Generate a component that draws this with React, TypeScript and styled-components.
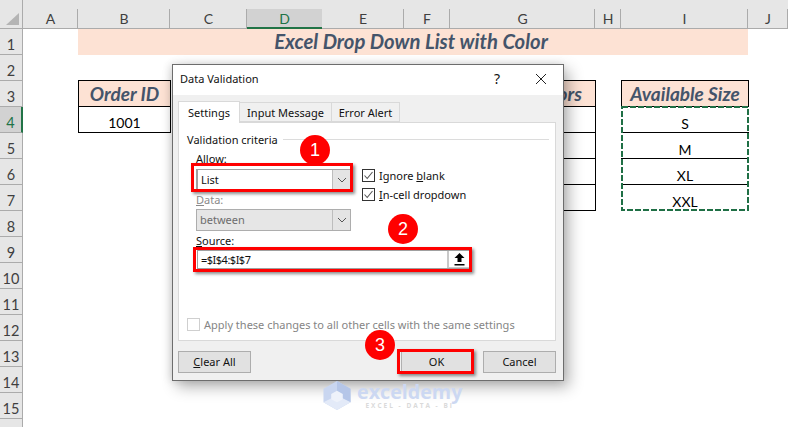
import React from "react";
import styled, { createGlobalStyle } from "styled-components";

const Global = createGlobalStyle`
  html, body { margin: 0; padding: 0; background: #fff; }
  body { width: 788px; height: 427px; overflow: hidden; }
`;

const Page = styled.div`
  position: relative;
  width: 788px;
  height: 427px;
  overflow: hidden;
  background: #fff;
`;

const Sheet = styled.div`
  display: grid;
  grid-template-columns: 23px 55px 92px 77px 75px 82px 46px 145px 26px 127px 40px;
  grid-template-rows: 29px repeat(16, 26px);
  font-family: "Lato", "Liberation Sans", sans-serif;
  color: #000;
`;

const Corner = styled.div`
  grid-column: 1;
  grid-row: 1;
  background: #e6e6e6;
  border-right: 1px solid #ababab;
  border-bottom: 1px solid #ababab;
  box-sizing: border-box;
  display: flex;
  align-items: flex-end;
  justify-content: flex-end;
  padding: 0 3px 3px 0;
`;

const ColHead = styled.div<{ $col: number; $sel?: boolean }>`
  grid-column: ${(p) => p.$col};
  grid-row: 1;
  padding-top: 9px;
  box-sizing: border-box;
  background: linear-gradient(#e6e6e6 9px, ${(p) => (p.$sel ? "#d2d2d2" : "#e6e6e6")} 9px);
  border-bottom: ${(p) => (p.$sel ? "2px solid #217346" : "1px solid #ababab")};
  position: relative;
  display: flex;
  align-items: center;
  justify-content: center;
  font-size: 14px;
  color: ${(p) => (p.$sel ? "#217346" : "#3f3f3f")};
  &::after {
    content: "";
    position: absolute;
    right: 0;
    top: 9px;
    bottom: 0;
    width: 1px;
    background: ${(p) => (p.$sel ? "transparent" : "#ababab")};
  }
`;

const RowHead = styled.div<{ $row: number; $sel?: boolean }>`
  grid-column: 1;
  grid-row: ${(p) => p.$row + 1};
  box-sizing: border-box;
  padding-top: 6px;
  background: ${(p) => (p.$sel ? "#d2d2d2" : "#e6e6e6")};
  border-bottom: 1px solid #ababab;
  border-right: ${(p) => (p.$sel ? "2px solid #217346" : "1px solid #ababab")};
  display: flex;
  align-items: center;
  justify-content: center;
  font-size: 14.5px;
  color: ${(p) => (p.$sel ? "#217346" : "#3f3f3f")};
`;

const Banner = styled.div`
  grid-column: 3 / 11;
  grid-row: 2;
  background: #fde2d4;
  color: #44546a;
  font-weight: 700;
  font-style: italic;
  font-size: 20.3px;
  display: flex;
  align-items: center;
  justify-content: center;
  padding: 0 4px 3px 0;
`;

const HeadCell = styled.div<{ $col: number }>`
  grid-column: ${(p) => p.$col};
  grid-row: 4;
  margin: -1px -1px 0 0;
  box-sizing: border-box;
  border: 1px solid #000;
  background: #fde2d4;
  color: #44546a;
  font-weight: 700;
  font-style: italic;
  font-size: 19px;
  display: flex;
  align-items: center;
  justify-content: center;
  white-space: nowrap;
`;

const DataCell = styled.div<{ $col: number; $row: number }>`
  grid-column: ${(p) => p.$col};
  grid-row: ${(p) => p.$row + 1};
  margin: -1px -1px 0 0;
  box-sizing: border-box;
  border: 1px solid #000;
  padding-top: 6px;
  font-size: 14px;
  display: flex;
  align-items: center;
  justify-content: center;
`;

const SizeCell = styled.div<{ $row: number; $first?: boolean }>`
  grid-column: 10;
  grid-row: ${(p) => p.$row + 1};
  margin: -1px -1px 0 0;
  box-sizing: border-box;
  border-top: ${(p) => (p.$first ? "none" : "1px solid #000")};
  padding-top: ${(p) => (p.$first ? 7 : 6)}px;
  font-size: 14px;
  display: flex;
  align-items: center;
  justify-content: center;
`;

const MarchingAnts = styled.svg`
  grid-column: 10;
  grid-row: 5 / 9;
  margin: -1px -1px 0 0;
  width: 128px;
  height: 105px;
  z-index: 1;
`;

const Dialog = styled.div`
  position: absolute;
  left: 172px;
  top: 64px;
  width: 392px;
  height: 317px;
  box-sizing: border-box;
  border: 1px solid #6d6d6d;
  background: #f0f0f0;
  box-shadow: 5px 6px 14px rgba(0, 0, 0, 0.3), -2px 0 8px rgba(0, 0, 0, 0.12);
  display: flex;
  flex-direction: column;
  font-family: "Noto Sans", "Liberation Sans", sans-serif;
  font-size: 11px;
  color: #111;
`;

const TitleBar = styled.div`
  height: 30px;
  flex: none;
  box-sizing: border-box;
  background: #fff;
  display: flex;
  align-items: center;
  padding: 0 16px 3px 7px;
`;

const TitleText = styled.span`
  flex: 1;
`;

const HelpMark = styled.span`
  font-size: 14px;
  margin-right: 35px;
`;

const Tabs = styled.div`
  display: flex;
  margin: 6px 0 0 5px;
  height: 21px;
  flex: none;
  align-items: flex-end;
`;

const Tab = styled.div<{ $active?: boolean; $w: number }>`
  width: ${(p) => p.$w}px;
  height: ${(p) => (p.$active ? 22 : 20)}px;
  box-sizing: border-box;
  display: flex;
  align-items: center;
  justify-content: center;
  background: ${(p) => (p.$active ? "#fff" : "#f0f0f0")};
  border: 1px solid #d9d9d9;
  border-bottom: ${(p) => (p.$active ? "none" : "1px solid #d9d9d9")};
  border-left: ${(p) => (p.$active ? "1px solid #d9d9d9" : "none")};
  position: relative;
  z-index: ${(p) => (p.$active ? 1 : 0)};
  margin-bottom: ${(p) => (p.$active ? -1 : 0)}px;
`;

const Panel = styled.div`
  margin: 0 7px 0 5px;
  height: 219px;
  flex: none;
  box-sizing: border-box;
  background: #fff;
  border: 1px solid #d9d9d9;
  padding: 9px 6px 9px 8px;
  display: flex;
  flex-direction: column;
`;

const Legend = styled.div`
  display: flex;
  align-items: center;
  gap: 5px;
  height: 15px;
  flex: none;
  &::after {
    content: "";
    flex: 1;
    height: 1px;
    background: #dcdcdc;
  }
`;

const Criteria = styled.div`
  margin-left: 9px;
  display: grid;
  grid-template-columns: 155px 1fr;
  column-gap: 11px;
`;

const FieldColumn = styled.div`
  display: flex;
  flex-direction: column;
`;

const FieldLabel = styled.div<{ $muted?: boolean; $h: number; $pad?: number }>`
  height: ${(p) => p.$h}px;
  display: flex;
  align-items: flex-end;
  padding-bottom: ${(p) => p.$pad ?? 2}px;
  box-sizing: border-box;
  color: ${(p) => (p.$muted ? "#8a8a8a" : "#111")};
  span { white-space: pre; }
`;

const U = styled.u`
  text-decoration-thickness: 1px;
  text-underline-offset: 1px;
`;

const Select = styled.div<{ $disabled?: boolean }>`
  height: ${(p) => (p.$disabled ? 22 : 21)}px;
  box-sizing: border-box;
  border: 1px solid ${(p) => (p.$disabled ? "#adadad" : "#a0a0a0")};
  border-width: ${(p) => (p.$disabled ? "1px" : "1px 1px 1px 2px")};
  background: ${(p) => (p.$disabled ? "#e6e6e6" : "#fff")};
  color: ${(p) => (p.$disabled ? "#6d6d6d" : "#111")};
  display: flex;
  align-items: center;
  padding-left: 3px;
  padding-bottom: 1px;
`;

const SelectValue = styled.span`
  flex: 1;
`;

const Caret = styled.span`
  width: 17px;
  align-self: stretch;
  margin-bottom: -1px;
  background: #e4e4e4;
  border-left: 1px solid #bdbdbd;
  display: flex;
  align-items: center;
  justify-content: center;
`;

const Checks = styled.div`
  display: flex;
  flex-direction: column;
  gap: 7px;
  padding-top: 22px;
`;

const CheckRow = styled.div<{ $muted?: boolean }>`
  display: flex;
  align-items: center;
  gap: 4px;
  height: 12px;
  color: ${(p) => (p.$muted ? "#858585" : "#111")};
  white-space: nowrap;
`;

const Box = styled.span<{ $muted?: boolean }>`
  width: 13px;
  height: 13px;
  flex: none;
  box-sizing: border-box;
  border: 1px solid ${(p) => (p.$muted ? "#cfcfcf" : "#333")};
  background: #fff;
  display: flex;
  align-items: center;
  justify-content: center;
`;

const SourceRow = styled.div`
  width: 273px;
  height: 19px;
  margin-left: 10px;
  box-sizing: border-box;
  border: 1px solid #a0a0a0;
  display: flex;
  align-items: center;
  padding-left: 3px;
  background: #fff;
`;

const SourceValue = styled.span`
  flex: 1;
  letter-spacing: -0.5px;
`;

const RangeButton = styled.span`
  width: 20px;
  align-self: stretch;
  background: #fff;
  border-left: 2px solid #c9c9c9;
  box-shadow: inset 0 -1px 0 #c9c9c9;
  display: flex;
  align-items: center;
  justify-content: center;
`;

const SourceLabel = styled(FieldLabel)`
  margin-left: 9px;
`;

const ApplyRow = styled(CheckRow)`
  margin-top: auto;
  margin-bottom: 1px;
`;

const Footer = styled.div`
  display: flex;
  padding: 10px 7px 0 5px;
  gap: 11px;
`;

const Button = styled.div<{ $primary?: boolean; $w: number }>`
  width: ${(p) => p.$w}px;
  height: 22px;
  box-sizing: border-box;
  background: #e1e1e1;
  border: 1px solid ${(p) => (p.$primary ? "#b0b0b0" : "#adadad")};
  border-bottom-color: ${(p) => (p.$primary ? "#0078d7" : "#adadad")};
  padding-bottom: 1px;
  display: flex;
  align-items: center;
  justify-content: center;
  &:first-child { margin-right: auto; }
`;

const Highlight = styled.div<{ $x: number; $y: number; $w: number; $h: number }>`
  position: absolute;
  left: ${(p) => p.$x}px;
  top: ${(p) => p.$y}px;
  width: ${(p) => p.$w}px;
  height: ${(p) => p.$h}px;
  box-sizing: border-box;
  border: 3px solid #f00;
  box-shadow: 2px 2px 3px rgba(0, 0, 0, 0.45);
`;

const Badge = styled.div<{ $x: number; $y: number }>`
  position: absolute;
  left: ${(p) => p.$x - 15}px;
  top: ${(p) => p.$y - 15}px;
  width: 30px;
  height: 30px;
  border-radius: 50%;
  background: #f00;
  color: #fff;
  font-family: "Liberation Sans", sans-serif;
  font-size: 18px;
  display: flex;
  align-items: center;
  justify-content: center;
`;

const Watermark = styled.div`
  position: absolute;
  left: 323px;
  top: 381px;
  display: flex;
  gap: 6px;
  pointer-events: none;
`;

const WatermarkWords = styled.div`
  display: flex;
  flex-direction: column;
  align-items: center;
`;

const WatermarkName = styled.div`
  font-family: "Open Sans", "Liberation Sans", sans-serif;
  font-weight: 700;
  font-size: 19.7px;
  line-height: 20px;
  margin-top: 1px;
  color: #ccd8f2;
`;

const WatermarkTag = styled.div`
  font-family: "Open Sans", "Liberation Sans", sans-serif;
  font-weight: 700;
  font-size: 6.5px;
  letter-spacing: 2px;
  line-height: 8px;
  color: #dadada;
`;

const Check = () => (
  <svg width="11" height="11" viewBox="0 0 11 11" fill="none">
    <path d="M1.5 5.5 L4.2 8.5 L9.5 2" stroke="#555" strokeWidth="1.1" />
  </svg>
);

const Chevron = ({ color = "#555" }: { color?: string }) => (
  <svg width="10" height="6" viewBox="0 0 10 6" fill="none">
    <path d="M1 1 L5 5 L9 1" stroke={color} strokeWidth="1" />
  </svg>
);

const columns = ["A", "B", "C", "D", "E", "F", "G", "H", "I", "J"];
const rows = Array.from({ length: 16 }, (_, i) => i + 1);

export default function App() {
  return (
    <Page>
      <Global />
      <Sheet>
        <Corner>
          <svg width="13" height="12" viewBox="0 0 13 12">
            <polygon points="13,0 13,12 0,12" fill="#b4b4b4" />
          </svg>
        </Corner>
        {columns.map((c, i) => (
          <ColHead key={c} $col={i + 2} $sel={c === "D"}>
            {c}
          </ColHead>
        ))}
        {rows.map((r) => (
          <RowHead key={r} $row={r} $sel={r === 4}>
            {r <= 15 ? r : ""}
          </RowHead>
        ))}
        <Banner>Excel Drop Down List with Color</Banner>
        <HeadCell $col={3}>Order ID</HeadCell>
        <HeadCell $col={8}>Product Colors</HeadCell>
        <DataCell $col={3} $row={4}>1001</DataCell>
        {[4, 5, 6, 7].map((r) => (
          <DataCell key={r} $col={8} $row={r} />
        ))}
        <HeadCell $col={10}>Available Size</HeadCell>
        {["S", "M", "XL", "XXL"].map((s, i) => (
          <SizeCell key={s} $row={i + 4} $first={i === 0}>
            {s}
          </SizeCell>
        ))}
        <MarchingAnts viewBox="0 0 128 105">
          <rect x="1" y="1" width="126" height="103" fill="none" stroke="#1f6f45" strokeWidth="2" strokeDasharray="6 2" />
        </MarchingAnts>
      </Sheet>

      <Dialog>
        <TitleBar>
          <TitleText>Data Validation</TitleText>
          <HelpMark>?</HelpMark>
          <svg width="12" height="12" viewBox="0 0 12 12" fill="none">
            <path d="M1 1 L11 11 M11 1 L1 11" stroke="#222" strokeWidth="1" />
          </svg>
        </TitleBar>
        <Tabs>
          <Tab $active $w={62}>Settings</Tab>
          <Tab $w={92}>Input Message</Tab>
          <Tab $w={68}>Error Alert</Tab>
        </Tabs>
        <Panel>
          <Legend>Validation criteria</Legend>
          <Criteria>
            <FieldColumn>
              <FieldLabel $h={22} $pad={3}>
                <span><U>A</U>llow:</span>
              </FieldLabel>
              <Select>
                <SelectValue>List</SelectValue>
                <Caret><Chevron /></Caret>
              </Select>
              <FieldLabel $muted $h={19}>
                <span><U>D</U>ata:</span>
              </FieldLabel>
              <Select $disabled>
                <SelectValue>between</SelectValue>
                <Caret><Chevron /></Caret>
              </Select>
            </FieldColumn>
            <Checks>
              <CheckRow>
                <Box><Check /></Box>
                <span>Ignore <U>b</U>lank</span>
              </CheckRow>
              <CheckRow>
                <Box><Check /></Box>
                <span><U>I</U>n-cell dropdown</span>
              </CheckRow>
            </Checks>
          </Criteria>
          <SourceLabel $h={19}>
            <span><U>S</U>ource:</span>
          </SourceLabel>
          <SourceRow>
            <SourceValue>=$I$4:$I$7</SourceValue>
            <RangeButton>
              <svg width="11" height="13" viewBox="0 0 11 13">
                <path d="M5.5 0 L10.5 5 L7.5 5 L7.5 9 L3.5 9 L3.5 5 L0.5 5 Z" fill="#000" />
                <rect x="0.5" y="11" width="10" height="1.5" fill="#000" />
              </svg>
            </RangeButton>
          </SourceRow>
          <ApplyRow $muted>
            <Box $muted />
            <span>Apply these changes to all other cells with the same settings</span>
          </ApplyRow>
        </Panel>
        <Footer>
          <Button $w={73}><span><U>C</U>lear All</span></Button>
          <Button $primary $w={71}>OK</Button>
          <Button $w={73}>Cancel</Button>
        </Footer>
      </Dialog>

      <Highlight $x={191} $y={163} $w={162} $h={29} />
      <Highlight $x={193} $y={247} $w={279} $h={25} />
      <Highlight $x={397} $y={349} $w={77} $h={25} />
      <Badge $x={315} $y={150}>1</Badge>
      <Badge $x={403} $y={229}>2</Badge>
      <Badge $x={380} $y={345}>3</Badge>

      <Watermark>
        <svg width="28" height="29" viewBox="0 0 28 30">
          <polygon points="14,0 28,8 28,22 14,30 0,22 0,8" fill="#c9d6f0" />
          <polygon points="14,0 28,8 28,22 14,15" fill="#b5c6e8" />
          <polygon points="0,22 14,15 28,22 14,30" fill="#e3eaf8" />
          <polygon points="14,10 20,13.5 20,19 14,22 8,19 8,13.5" fill="#eef2fa" />
        </svg>
        <WatermarkWords>
          <WatermarkName>exceldemy</WatermarkName>
          <WatermarkTag>EXCEL - DATA - BI</WatermarkTag>
        </WatermarkWords>
      </Watermark>
    </Page>
  );
}
